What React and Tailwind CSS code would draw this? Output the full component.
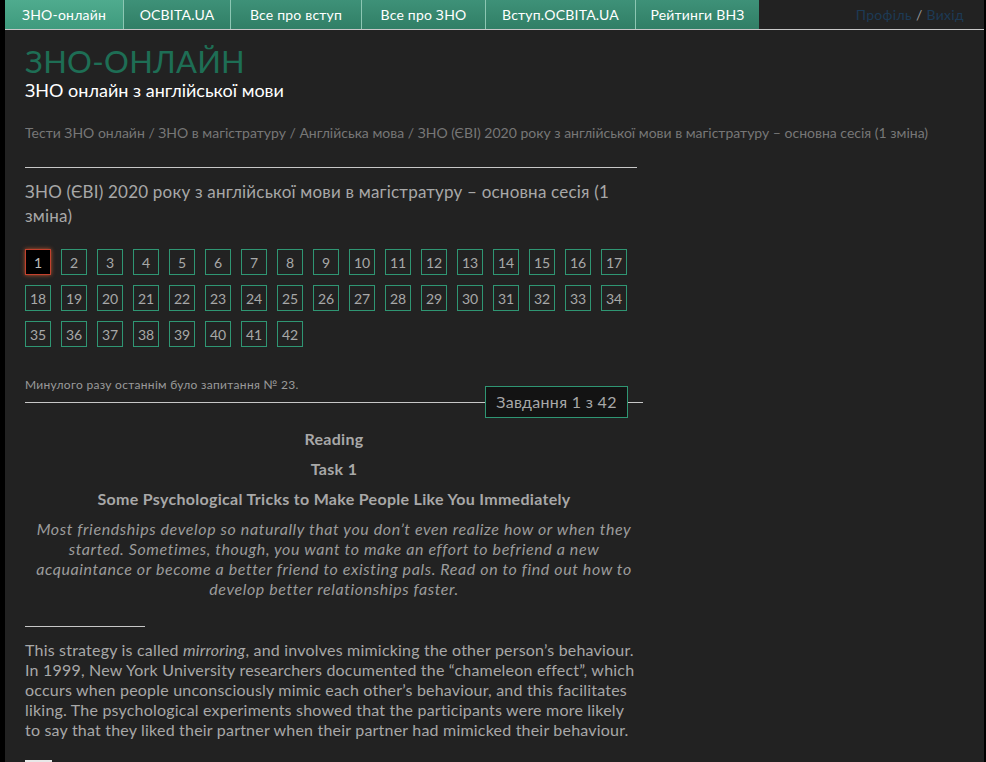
import React from 'react';

const tabs = [
    { label: 'ЗНО-онлайн', w: 'w-[118px]', active: true },
    { label: 'OCBITA.UA', w: 'w-[107px]' },
    { label: 'Все про вступ', w: 'w-[131px]' },
    { label: 'Все про ЗНО', w: 'w-[124px]' },
    { label: 'Вступ.OCBITA.UA', w: 'w-[150px]' },
    { label: 'Рейтинги ВНЗ', w: 'w-[124px]' },
];

const questions = Array.from({ length: 42 }, (_, i) => i + 1);

const font = { fontFamily: 'Lato, "Open Sans", "DejaVu Sans", sans-serif' };

const App = () => {
    return (
        <div className="min-h-screen bg-black pl-[5px] pr-[2px]" style={font}>
            <div className="min-h-screen bg-[#222222]">
                {/* top navigation */}
                <nav className="flex h-[30px] items-stretch border-b border-[#c8c8c8]">
                    {tabs.map((tab, i) => (
                        <a
                            key={tab.label}
                            href="#"
                            className={`${tab.w} flex items-center justify-center text-[14px] tracking-[0.2px] text-white ${
                                i > 0 ? 'border-l border-[#8cc7b3]' : ''
                            } ${
                                tab.active
                                    ? 'bg-gradient-to-b from-[#4fab8e] to-[#3f9a7d]'
                                    : 'bg-gradient-to-b from-[#3e9178] to-[#317f66]'
                            }`}
                        >
                            {tab.label}
                        </a>
                    ))}
                    <div className="ml-auto flex items-center pr-[20px] text-[14px] tracking-[0.3px]">
                        <a href="#" className="text-[#1d3a55]">Профіль</a>
                        <span className="mx-[4px] text-[#9a9a9a]">/</span>
                        <a href="#" className="text-[#1d3a55]">Вихід</a>
                    </div>
                </nav>

                <main className="w-[638px] pl-[20px]">
                    <header className="pt-[12px]">
                        <h1 className="text-[31px] leading-[38px] tracking-[0.3px] text-[#1e6e55]">
                            ЗНО-ОНЛАЙН
                        </h1>
                        <p className="mt-[-1px] text-[18px] leading-[22px] text-white">
                            ЗНО онлайн з англійської мови
                        </p>
                    </header>

                    <div className="mt-[23px] w-[950px] text-[14px] leading-[18px] text-[#777777]">
                        Тести ЗНО онлайн / ЗНО в магістратуру / Англійська мова / ЗНО (ЄВІ) 2020
                        року з англійської мови в магістратуру – основна сесія (1 зміна)
                    </div>

                    <div className="mt-[25px] h-px w-[612px] bg-[#c8c8c8]" />

                    <h2 className="mt-[12px] text-[17px] leading-[24px] tracking-[0.2px] text-[#a8a8a8]">
                        ЗНО (ЄВІ) 2020 року з англійської мови в магістратуру – основна сесія (1
                        <br />
                        зміна)
                    </h2>

                    <div className="mt-[21px] grid w-[612px] grid-cols-[repeat(17,26px)] gap-[10px]">
                        {questions.map((n) => (
                            <button
                                key={n}
                                type="button"
                                className={`flex h-[26px] w-[26px] items-center justify-center border text-[14px] ${
                                    n === 1
                                        ? 'border-[#c2412e] bg-black text-[#bbbbbb] shadow-[0_0_4px_#c2572e]'
                                        : 'border-[#2f9673] text-[#a8a8a8]'
                                }`}
                            >
                                {n}
                            </button>
                        ))}
                    </div>

                    <p className="mt-[31px] text-[12px] leading-[14px] tracking-[0.3px] text-[#9a9a9a]">
                        Минулого разу останнім було запитання № 23.
                    </p>

                    <div className="mt-[-6px] flex items-center">
                        <div className="h-px flex-1 bg-[#c8c8c8]" />
                        <div className="flex h-[32px] w-[143px] items-center justify-center border border-[#2f9673] bg-[#131313] text-[16px] tracking-[0.3px] text-[#a8a8a8]">
                            Завдання 1 з 42
                        </div>
                        <div className="h-px w-[15px] bg-[#c8c8c8]" />
                    </div>

                    <article className="mt-[6px] text-[#a8a8a8]">
                        <div className="text-center text-[16px] font-bold leading-[30px] tracking-[0.3px]">
                            <p>Reading</p>
                            <p>Task 1</p>
                            <p>Some Psychological Tricks to Make People Like You Immediately</p>
                        </div>
                        <p className="mt-[5px] text-center text-[16px] italic leading-[20px] tracking-[0.6px] text-[#9c9c9c]">
                            Most friendships develop so naturally that you don’t even realize how or when they
                            <br />
                            started. Sometimes, though, you want to make an effort to befriend a new
                            <br />
                            acquaintance or become a better friend to existing pals. Read on to find out how to
                            <br />
                            develop better relationships faster.
                        </p>

                        <div className="mt-[27px] h-px w-[120px] bg-[#c8c8c8]" />

                        <p className="mt-[13px] text-[16px] leading-[20px] tracking-[0.2px]">
                            This strategy is called <em>mirroring</em>, and involves mimicking the other person’s behaviour.
                            <br />
                            In 1999, New York University researchers documented the “chameleon effect”, which
                            <br />
                            occurs when people unconsciously mimic each other’s behaviour, and this facilitates
                            <br />
                            liking. The psychological experiments showed that the participants were more likely
                            <br />
                            to say that they liked their partner when their partner had mimicked their behaviour.
                        </p>

                        <div className="mt-[20px] h-[10px] w-[27px] bg-[#e8e8e8]" />
                    </article>
                </main>
            </div>
        </div>
    );
};

export default App;
